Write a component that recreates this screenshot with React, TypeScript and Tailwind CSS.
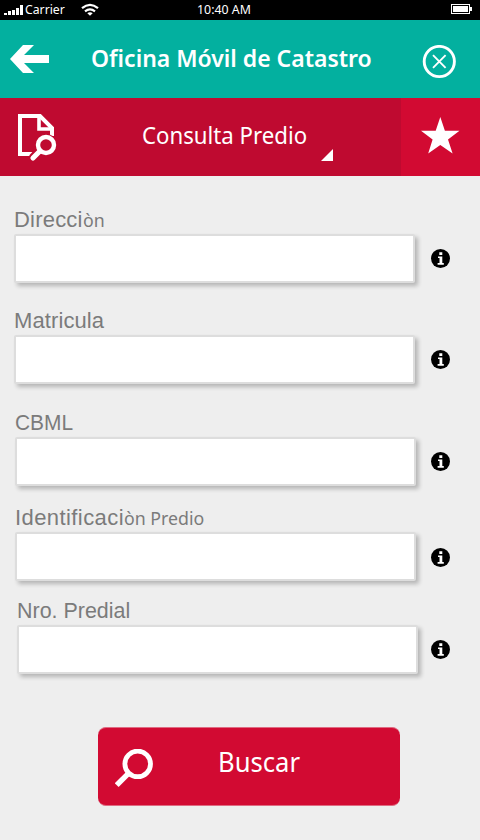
import type { ReactNode } from "react";

const humanist = "font-['Noto_Sans','Open_Sans',sans-serif]";
const grotesque = "font-['Liberation_Sans',Arial,sans-serif]";

function StatusBar() {
  return (
    <div className={`${humanist} flex h-5 items-start bg-black text-[13px] leading-5 text-white`}>
      <svg className="ml-1 h-5 w-[20px] shrink-0" viewBox="0 0 20 20" fill="white" shapeRendering="crispEdges">
        <path d="M0 13h3v2H0zM4 11h3v4H4zM8 10h3v5H8zM12 8h3v7h-3zM16 5h3v10h-3z" />
      </svg>
      <div className="w-[57px] shrink-0">
        <span className="ml-px inline-block origin-left -translate-y-px scale-x-[0.94]">Carrier</span>
      </div>
      <svg className="h-5 w-[18px] shrink-0" viewBox="0 0 18 20" fill="none" stroke="white" strokeWidth="2.2">
        <path d="M1 8.2Q9 1.6 17 8.2M4 11.4Q9 7.4 14 11.4" />
        <path d="M6.3 13.2Q9 11.2 11.7 13.2L9 15.8Z" fill="white" stroke="none" />
      </svg>
      <div className="ml-[98px] w-[253px] shrink-0">
        <span className="inline-block origin-left -translate-y-px scale-x-[0.95] whitespace-nowrap">10:40 AM</span>
      </div>
      <svg className="ml-px h-5 w-[22px] shrink-0" viewBox="0 0 22 20" shapeRendering="crispEdges">
        <path d="M.5 4.5h18v9h-18z" fill="none" stroke="white" />
        <path d="M2 6h15v6H2zM19 7h2v4h-2z" fill="white" />
      </svg>
    </div>
  );
}

function Header() {
  return (
    <header className="flex h-[78px] bg-[#03b09f] text-white">
      <svg className="ml-2.5 mt-[25px] h-[28px] w-[39px] shrink-0" viewBox="0 0 39 28" fill="white">
        <path d="M0 14 13 0h11L14 10h25v8H14l10 10H13z" />
      </svg>
      <h1 className={`${humanist} ml-[42px] mt-[20px] w-[331px] shrink-0 text-[24px] leading-9 font-semibold`}>
        <span className="inline-block origin-left scale-x-[0.957] whitespace-nowrap">Oficina Móvil de Catastro</span>
      </h1>
      <svg className="mt-[25px] h-[34px] w-[34px] shrink-0" viewBox="0 0 34 34" fill="none" stroke="white">
        <circle cx="17.3" cy="16.5" r="15.1" strokeWidth="2.9" />
        <path d="m11 10.2 12.6 12.6m0-12.6L11 22.8" strokeWidth="1.9" />
      </svg>
    </header>
  );
}

function Toolbar() {
  return (
    <nav className="flex h-[78px] bg-[#bf0a30] text-white">
      <svg className="ml-[18px] mt-4 h-[48px] w-[39px] shrink-0" viewBox="0 0 39 48" fill="none" stroke="white" strokeWidth="4">
        <path d="M15 40H2V2h20l12 12v8" />
        <path d="M21 2v13h13" strokeWidth="3.6" />
        <path d="m22 35-8 9" stroke="#bf0a30" strokeWidth="7.5" />
        <circle cx="28" cy="31" r="11" fill="#bf0a30" stroke="none" />
        <circle cx="28" cy="31" r="8" strokeWidth="4.4" />
        <path d="m22 37-7 7" strokeWidth="5.2" strokeLinecap="round" />
      </svg>
      <div className={`${humanist} ml-[85px] mt-[19px] w-[179px] shrink-0 text-[24px] leading-9`}>
        <span className="inline-block origin-left scale-x-[0.926] whitespace-nowrap">Consulta Predio</span>
      </div>
      <svg className="mt-[51px] h-3 w-3 shrink-0" viewBox="0 0 12 12" fill="white"><path d="M12 0v12H0z" /></svg>
      <div className="ml-auto w-[79px] bg-[#d20a32]">
        <svg className="ml-[20px] mt-[19px] h-[37px] w-[39px]" viewBox="0 0 39 37" fill="white">
          <path d="m19.3 0 4.6 13.7H38.5L27 22.5 31.6 36.5 19.3 28 7.2 36.5 11.6 22.5 0 13.7h14.7z" />
        </svg>
      </div>
    </nav>
  );
}

function InfoIcon() {
  return (
    <svg className="h-5 w-5 shrink-0" viewBox="0 0 20 20">
      <circle cx="9.5" cy="9.5" r="9.5" fill="black" />
      <path d="M8.3 3.2h3v2.7h-3zM7 7.5h4.3v6.6h1.5v1.6H6.6v-1.6h1.9V9.1H7z" fill="white" />
    </svg>
  );
}

function Field({ label, className, gap }: { label: ReactNode; className: string; gap: string }) {
  return (
    <label className={`block shrink-0 ${className}`}>
      <div className={`${grotesque} flex h-[29px] items-baseline text-[22px] leading-[29px] whitespace-pre text-[#7b7b7b]`}>
        {label}
      </div>
      <div className="flex items-center">
        <input className="h-[49px] w-[401px] rounded-[2px] border-2 border-[#ddd] bg-white shadow-[3px_3px_4px_rgba(0,0,0,0.24)] outline-none" />
        <div className={gap}><InfoIcon /></div>
      </div>
    </label>
  );
}

export default function App() {
  return (
    <div className="flex h-[840px] w-[480px] flex-col overflow-hidden bg-[#eee]">
      <StatusBar />
      <Header />
      <Toolbar />
      <main className="flex flex-col pt-[29px]">
        <Field
          className="ml-[14px]"
          gap="ml-4"
          label={<><span className="tracking-[0.2px]">Direcci</span><span className={`${humanist} origin-left scale-x-[0.96] text-[18.5px] leading-none`}>òn</span></>}
        />
        <Field className="mt-[23px] ml-[14px]" gap="ml-4" label={<span className="tracking-[0.1px]">Matricula</span>} />
        <Field className="mt-6 ml-[15px]" gap="ml-[15px]" label={<span className="origin-left scale-x-[0.95]">CBML</span>} />
        <Field
          className="mt-[17px] ml-[15px]"
          gap="mt-[2px] ml-[15px]"
          label={<><span className="tracking-[0.42px]">Identificaci</span><span className={`${humanist} origin-left scale-x-[0.96] text-[18.5px] leading-none`}>òn Predio</span></>}
        />
        <Field className="mt-[15px] ml-[17px]" gap="ml-[13px]" label={<span className="origin-left scale-x-[0.975]">Nro. Predial</span>} />
        <button className="mt-[53px] ml-[98px] flex h-[79px] w-[302px] rounded-[8px] border-y border-[#df6b82] bg-[#d20a32] bg-clip-border text-white">
          <svg className="ml-[17px] mt-[21px] h-[39px] w-[39px] shrink-0" viewBox="0 0 39 39" fill="none" stroke="white">
            <circle cx="22.7" cy="14.9" r="12.8" strokeWidth="4.8" />
            <path d="M14 23.8 1.7 36.2" strokeWidth="5.4" />
          </svg>
          <span className={`${humanist} ml-[64px] mt-[13px] inline-block origin-left scale-x-[0.915] text-[28px] leading-10`}>Buscar</span>
        </button>
      </main>
    </div>
  );
}
